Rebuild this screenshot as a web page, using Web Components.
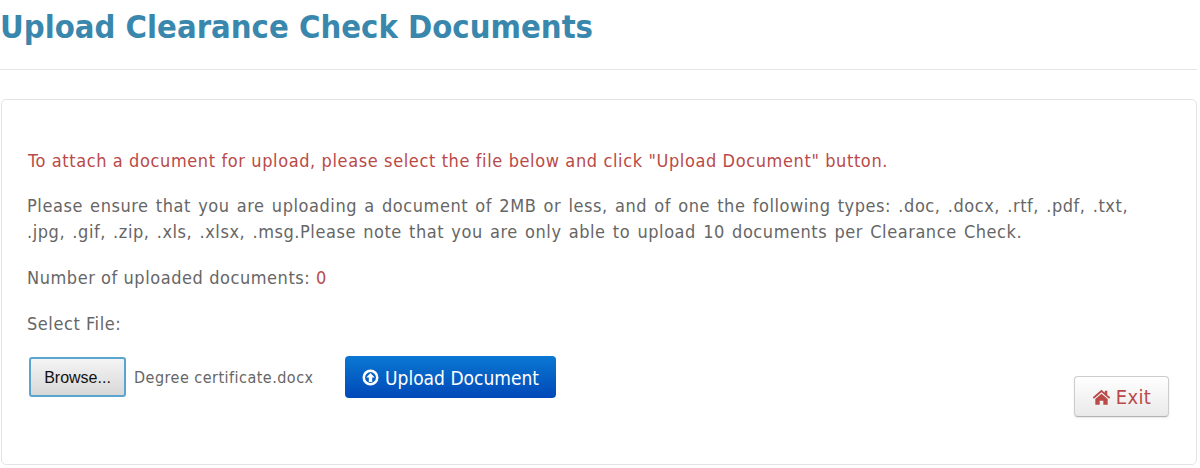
<!DOCTYPE html>
<html>
<head>
<meta charset="utf-8">
<title>Upload Clearance Check Documents</title>
<style>
html, body { margin: 0; background: #fff; overflow: hidden; }
body { font-family: "DejaVu Sans", sans-serif; color: #666; }
</style>
</head>
<body>
<upload-page>
    <page-header slot="header">Upload Clearance Check Documents</page-header>
    <upload-card>
        <p class="notice">To attach a document for upload, please select the file below and click "Upload Document" button.</p>
        <p class="details">Please ensure that you are uploading a document of 2MB or less, and of one the following types: .doc, .docx, .rtf, .pdf, .txt,<br>.jpg, .gif, .zip, .xls, .xlsx, .msg.Please note that you are only able to upload 10 documents per Clearance Check.</p>
        <p class="count">Number of uploaded documents: <span style="color:#b94a48">0</span></p>
        <p>Select File:</p>
        <upload-controls filename="Degree certificate.docx"></upload-controls>
    </upload-card>
</upload-page>

<script>
class UploadPage extends HTMLElement {
    constructor() {
        super();
        this.attachShadow({ mode: "open" }).innerHTML = `
<style>
:host { display: block; width: 1197px; }
</style>
<slot name="header"></slot>
<slot></slot>
`;
    }
}

class PageHeader extends HTMLElement {
    constructor() {
        super();
        this.attachShadow({ mode: "open" }).innerHTML = `
<style>
:host {
    display: block;
    height: 69px;
    border-bottom: 1px solid #e5e5e5;
    margin-bottom: 29px;
}
h1 {
    margin: 0;
    padding-top: 9px;
    font: bold 32.5px/36px "DejaVu Sans Condensed", "DejaVu Sans", sans-serif;
    color: #3a87ad;
}
</style>
<h1><slot></slot></h1>
`;
    }
}

class UploadCard extends HTMLElement {
    constructor() {
        super();
        this.attachShadow({ mode: "open" }).innerHTML = `
<style>
:host {
    display: block;
    margin-left: 1px;
    height: 366px;
    box-sizing: border-box;
    border: 1px solid #e3e3e3;
    border-radius: 5px;
    padding: 49px 26px 0 25px;
    font: 18px/24px "DejaVu Sans Condensed", "DejaVu Sans", sans-serif;
    letter-spacing: .56px;
    color: #666;
}
::slotted(p) { margin: 0 0 20px; white-space: nowrap; }
::slotted(.notice) { margin-left: 1px; color: #b94a48; letter-spacing: .61px; }
::slotted(.details) { line-height: 26px; margin-bottom: 21px; word-spacing: 1.5px; }
::slotted(.count) { margin-bottom: 22px; }
</style>
<slot></slot>
`;
    }
}

class UploadControls extends HTMLElement {
    constructor() {
        super();
        const name = this.getAttribute("filename");
        this.attachShadow({ mode: "open" }).innerHTML = `
<style>
:host { display: flex; align-items: flex-start; margin: 12px 0 0 1px; letter-spacing: 0; }
.browse {
    width: 97px;
    height: 40px;
    box-sizing: border-box;
    margin: 1px 0 0 1px;
    border: 2px solid #5aa5cf;
    border-radius: 3px;
    background: linear-gradient(#f4f4f4, #d8d8d8);
    font: 16px/37px "Liberation Sans", sans-serif;
    color: #111;
    text-align: center;
}
.name {
    margin: 11px 31px 0 8px;
    font-size: 16px;
    letter-spacing: .48px;
    line-height: 22px;
    width: 180px;
    white-space: nowrap;
}
.upload {
    width: 211px;
    height: 42px;
    box-sizing: border-box;
    display: flex;
    align-items: center;
    justify-content: center;
    gap: 6px;
    padding-top: 1px;
    border-radius: 4px;
    background: linear-gradient(#0a78d2, #0048b8);
    color: #fff;
    font-size: 19px;
}
.upload svg { width: 17px; height: 17px; }
.exit {
    margin: 20px 1px 0 auto;
    width: 95px;
    height: 41px;
    box-sizing: border-box;
    display: flex;
    align-items: center;
    justify-content: center;
    gap: 5px;
    border: 1px solid #ccc;
    border-bottom-color: #b3b3b3;
    border-radius: 4px;
    background: linear-gradient(#fff, #e9e9e9);
    box-shadow: 0 1px 2px rgba(0,0,0,.1);
    color: #b94a48;
    font-size: 20px;
    letter-spacing: .3px;
}
.exit svg { width: 19px; height: 16px; }
</style>
<div class="browse">Browse...</div>
<div class="name">${name}</div>
<div class="upload">
    <svg viewBox="0 0 24 24"><circle cx="12" cy="12" r="9.5" fill="none" stroke="#fff" stroke-width="3.6"/><path d="M12 5.500 18 12h-3.600v6.500H9.600V12H6z" fill="#fff"/></svg>
    <span>Upload Document</span>
</div>
<div class="exit">
    <svg viewBox="0 0 26 22"><path d="M13 1 1 11.500l1.600 1.900L13 4.500l10.400 8.900 1.600-1.900-4-3.400V2.500h-3.500v2.600z" fill="#b94a48"/><path d="M13 6.500 4.500 13.700V21.500h6v-5.500h5v5.500h6v-7.800z" fill="#b94a48"/></svg>
    <span>Exit</span>
</div>
`;
    }
}

customElements.define("upload-page", UploadPage);
customElements.define("page-header", PageHeader);
customElements.define("upload-card", UploadCard);
customElements.define("upload-controls", UploadControls);
</script>
</body>
</html>
